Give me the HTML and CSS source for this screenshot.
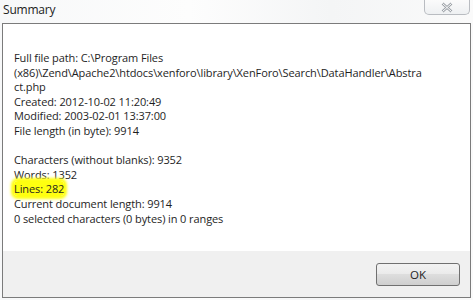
FILE: index.html
```html
<!DOCTYPE html>
<html>
<head>
<meta charset="utf-8">
<link rel="stylesheet" href="styles.css">
</head>
<body>
<div class="window">
  <div class="titlebar">
    <span class="title">Summary</span>
    <div class="close"><svg width="12" height="11" viewBox="0 0 12 11"><path d="M1.5 1.5 L10.5 9.5 M10.5 1.5 L1.5 9.5" stroke="#9ba0a6" stroke-width="2.6" fill="none"/><path d="M1.5 1.5 L10.5 9.5 M10.5 1.5 L1.5 9.5" stroke="#ffffff" stroke-width="1" fill="none"/></svg></div>
  </div>
  <div class="frame">
    <div class="content">
      <p class="block">Full file path: C:\Program Files<br>(x86)\Zend\Apache2\htdocs\xenforo\library\XenForo\Search\DataHandler\Abstra<br>ct.php<br>Created: 2012-10-02 11:20:49<br>Modified: 2003-02-01 13:37:00<br>File length (in byte): 9914</p>
      <p class="block">Characters (without blanks): 9352<br>Words: 1352<br><span class="hl">Lines: 282</span><br>Current document length: 9914<br>0 selected characters (0 bytes) in 0 ranges</p>
    </div>
    <div class="footer">
      <button class="ok">OK</button>
    </div>
  </div>
</div>
</body>
</html>
```

FILE: styles.css
```css
html, body {
  margin: 0;
  padding: 0;
  background: #ffffff;
}
.window {
  width: 473px;
  height: 300px;
  display: flex;
  flex-direction: column;
  font-family: "Open Sans", "Noto Sans", sans-serif;
  color: #1e1e1e;
  background: linear-gradient(90deg, #f7f8f9 0%, #fdfdfd 40%, #f4f5f6 70%, #fafafa 100%);
}
.titlebar {
  height: 23px;
  display: flex;
  justify-content: space-between;
  align-items: flex-start;
  padding: 0 3px 0 3px;
}
.title {
  font-size: 12px;
  line-height: 12px;
  margin-top: 4px;
  color: #222;
  letter-spacing: -0.2px;
}
.close {
  width: 44px;
  height: 14px;
  border: 1px solid #b9bcc1;
  border-top: none;
  border-radius: 0 0 5px 5px;
  background: linear-gradient(#fbfbfb, #eef0f2);
  display: flex;
  align-items: center;
  justify-content: center;
}
.frame {
  margin: 0 2px 2px 2px;
  flex: 1;
  border: 1px solid #7b7b7b;
  display: flex;
  flex-direction: column;
  background: #ffffff;
}
.content {
  flex: 1;
  padding: 27px 10px 0 11px;
  font-size: 11px;
  line-height: 14.6px;
  letter-spacing: -0.1px;
}
.block {
  margin: 0 0 14.6px 0;
}
.hl {
  background: #ffff10;
  box-shadow: 0 0 3px 3px #ffff10;
  border-radius: 4px;
}
.footer {
  height: 46px;
  background: #f0f0f0;
  display: flex;
  justify-content: flex-end;
  align-items: flex-start;
  padding: 12px 10px 0 0;
  box-sizing: border-box;
}
.ok {
  width: 84px;
  height: 23px;
  border: 1px solid #707070;
  border-radius: 3px;
  background: linear-gradient(#f2f2f2 0%, #ebebeb 45%, #dddddd 50%, #cfcfcf 100%);
  font-family: "Open Sans", "Noto Sans", sans-serif;
  font-size: 11.5px;
  color: #1e1e1e;
  padding: 0;
}
```
